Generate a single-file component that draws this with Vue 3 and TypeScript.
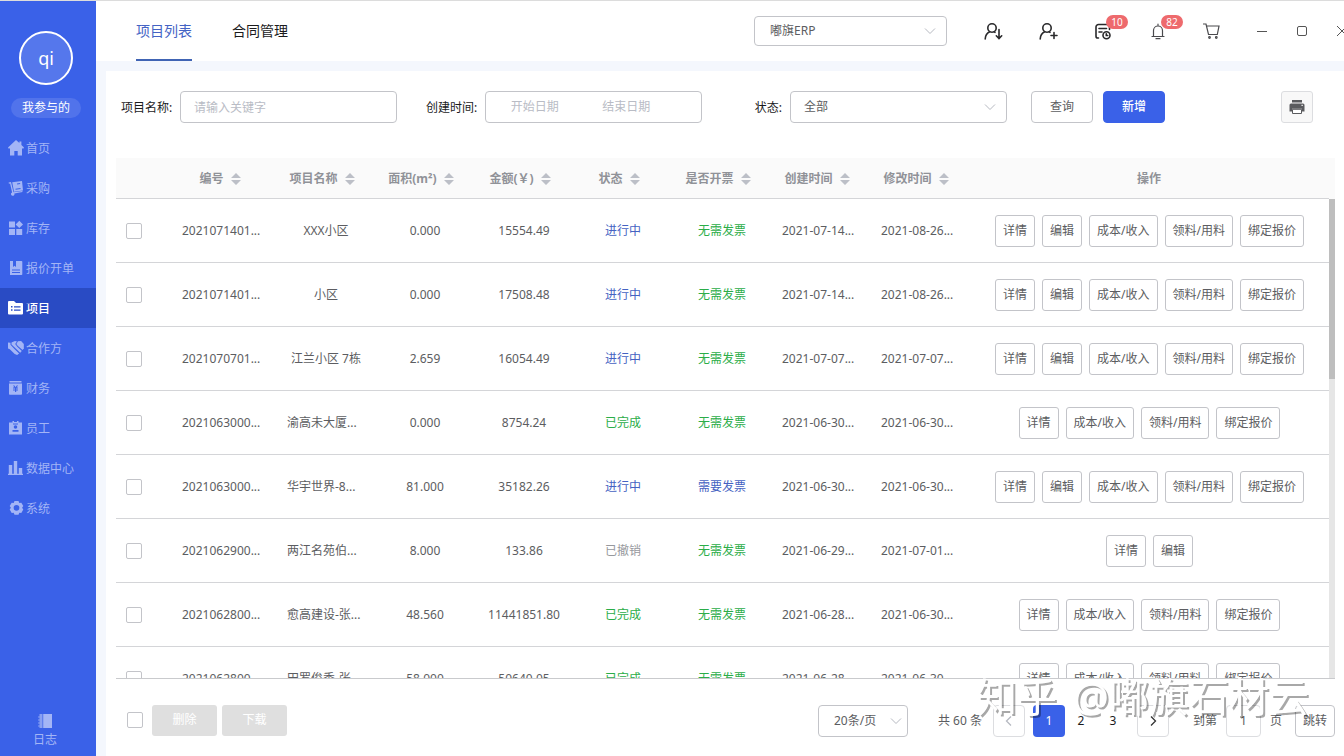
<script setup lang="ts">
import { computed, ref } from 'vue'

interface Project {
  code: string
  name: string
  area: string
  amount: string
  status: '进行中' | '已完成' | '已撤销'
  invoice: '无需发票' | '需要发票'
  created: string
  updated: string
  actions: string[]
}

const menu = [
  { label: '首页', icon: 'home' },
  { label: '采购', icon: 'purchase' },
  { label: '库存', icon: 'stock' },
  { label: '报价开单', icon: 'quote' },
  { label: '项目', icon: 'project' },
  { label: '合作方', icon: 'partner' },
  { label: '财务', icon: 'finance' },
  { label: '员工', icon: 'staff' },
  { label: '数据中心', icon: 'data' },
  { label: '系统', icon: 'system' },
]
const activeMenu = ref('项目')

const columns = ['编号', '项目名称', '面积(m²)', '金额(￥)', '状态', '是否开票', '创建时间', '修改时间']

const open = ['详情', '编辑', '成本/收入', '领料/用料', '绑定报价']
const done = ['详情', '成本/收入', '领料/用料', '绑定报价']

const projects: Project[] = [
  { code: '2021071401...', name: 'XXX小区', area: '0.000', amount: '15554.49', status: '进行中', invoice: '无需发票', created: '2021-07-14...', updated: '2021-08-26...', actions: open },
  { code: '2021071401...', name: '小区', area: '0.000', amount: '17508.48', status: '进行中', invoice: '无需发票', created: '2021-07-14...', updated: '2021-08-26...', actions: open },
  { code: '2021070701...', name: '江兰小区 7栋', area: '2.659', amount: '16054.49', status: '进行中', invoice: '无需发票', created: '2021-07-07...', updated: '2021-07-07...', actions: open },
  { code: '2021063000...', name: '渝高未大厦...', area: '0.000', amount: '8754.24', status: '已完成', invoice: '无需发票', created: '2021-06-30...', updated: '2021-06-30...', actions: done },
  { code: '2021063000...', name: '华宇世界-8...', area: '81.000', amount: '35182.26', status: '进行中', invoice: '需要发票', created: '2021-06-30...', updated: '2021-06-30...', actions: open },
  { code: '2021062900...', name: '两江名苑伯...', area: '8.000', amount: '133.86', status: '已撤销', invoice: '无需发票', created: '2021-06-29...', updated: '2021-07-01...', actions: ['详情', '编辑'] },
  { code: '2021062800...', name: '愈高建设-张...', area: '48.560', amount: '11441851.80', status: '已完成', invoice: '无需发票', created: '2021-06-28...', updated: '2021-06-30...', actions: done },
  { code: '2021062800...', name: '田罗俊秀-张...', area: '58.000', amount: '50640.05', status: '已完成', invoice: '无需发票', created: '2021-06-28...', updated: '2021-06-30...', actions: done },
]

const tone: Record<string, string> = {
  进行中: 'blue',
  需要发票: 'blue',
  已完成: 'green',
  无需发票: 'green',
  已撤销: 'gray',
}

const clipped = (text: string) => text.endsWith('...')

const selected = ref<number[]>([])
const allSelected = computed({
  get: () => selected.value.length === projects.length,
  set: (on: boolean) => {
    selected.value = on ? projects.map((_, i) => i) : []
  },
})

const page = ref(1)
const jump = ref('1')
</script>

<template>
  <div class="app">
    <aside class="sidebar">
      <div class="profile">
        <div class="avatar">qi</div>
        <button class="mine" type="button">我参与的</button>
      </div>
      <nav class="menu">
        <a
          v-for="item in menu"
          :key="item.label"
          href="#"
          :class="['menu-item', { active: item.label === activeMenu }]"
          @click.prevent="activeMenu = item.label"
        >
          <svg class="menu-icon" viewBox="0 0 16 16" aria-hidden="true">
            <path v-if="item.icon === 'home'" d="M8 0 0 7.400l.8 1.300L2 8.200V15.500h4.300v-4.500h3.400v4.500H14V8.200l1.200.5.8-1.300-2.600-2.500V1.600h-2v1.500z" />
            <template v-else-if="item.icon === 'purchase'">
              <path d="M.6 2.600 3 2l2.500 10.200 8.800-1.300.2 1.200-8.200 1.300a1.700 1.700 0 1 1-2.200-.9L2.100 3.500.9 3.800z" />
              <path fill-rule="evenodd" d="m4.200 2.300 9.800-1.300 1 9.500-9 1.300zM9 3.500l.2 1 3-.4-.1-1zm-1.600 5.300.2 1 5-.7-.1-1z" />
            </template>
            <path v-else-if="item.icon === 'stock'" d="M1 1.500h6v6H1zM1 9h6v6H1zM8.300 9h5.900v6H8.300zM11.300.8 15 4.500l-3.700 3.600-3.700-3.600z" />
            <path v-else-if="item.icon === 'quote'" fill-rule="evenodd" d="M2 1h3v6l1.500-1.300L8 7V1h5.500a.8.800 0 0 1 .8.800v12.400a.8.800 0 0 1-.8.800H2zm2 8.500v1h8v-1zM4 12v1h8v-1z" />
            <path v-else-if="item.icon === 'project'" fill-rule="evenodd" d="M0 2.200C0 1.500.5 1 1.200 1H6l2 2h6a1 1 0 0 1 1 1v9.500a1 1 0 0 1-1 1H1a1 1 0 0 1-1-1zM3 6v1.500h1.500V6zm3 .2v1.200h6.500V6.200zM3 9.300v1.500h1.500V9.300zm3 .2v1.200h6.500V9.500z" />
            <template v-else-if="item.icon === 'partner'">
              <path d="M0 2.500 2.500 2.800v2l4.200 4.400 4.400 4.200-2 1.500-2.400-.8L1.800 9.300 0 8.500z" />
              <path d="M3.500 2.600 7 1l2 .6L7.200 4l2.100 2.800L13.800 11l-1.600 1.800L3.500 4.500z" />
              <path d="m9.900 1.300 3.200-.2 2.700 3v4.300l-1.300 1.700-4.600-4.200L8.400 4z" />
            </template>
            <path v-else-if="item.icon === 'finance'" fill-rule="evenodd" d="M1.500 1h12v1.500h-12zM1 3.500h13V14a.8.800 0 0 1-.8.800H1.800A.8.800 0 0 1 1 14zM5 5.600l1.500 2H5v1h2v1H5v1h2V12h1.200v-1.400H10v-1H8.200v-1H10v-1H8.600l1.500-2H8.700L7.600 7.200 6.400 5.600z" />
            <path v-else-if="item.icon === 'staff'" fill-rule="evenodd" d="M1 2.500h3.500V1H6v1h3V1h1.500v1.500H14v12H1zm6.500 2.700a1.800 1.800 0 1 0 0 3.600 1.800 1.800 0 0 0 0-3.600zM4.500 10v1.800h6V10zM5 3.500v1h5v-1z" />
            <path v-else-if="item.icon === 'data'" d="M.8 5H4.200v9H.8zM5.800 1H9.200v13H5.800zM10.800 8H14.200v6h-3.400zM0 13.800h15V15H0z" />
            <path v-else fill-rule="evenodd" d="M6.500 1h4l.8 1.900 2-.2 2 3.400-1.200 1.700 1.200 1.700-2 3.500-2-.3-.8 2h-4l-.8-2-2 .3-2-3.500L2.900 7.800 1.700 6.100l2-3.400 2 .2zm2 4a2.800 2.800 0 1 0 0 5.700 2.800 2.800 0 0 0 0-5.700z" />
          </svg>
          <span>{{ item.label }}</span>
        </a>
      </nav>
      <a class="log" href="#" @click.prevent>
        <svg class="log-icon" viewBox="0 0 16 16" aria-hidden="true">
          <path d="M2.500 1h3v14h-3v-1.500H1v-1h1.500v-2H1v-1h1.500v-2H1v-1h1.500v-2H1v-1h1.500z" opacity=".75" />
          <path d="M6.200 1H15v14H6.200z" />
        </svg>
        <span>日志</span>
      </a>
    </aside>

    <div class="main">
      <header class="topbar">
        <nav class="tabs">
          <a class="tab current" href="#" @click.prevent>项目列表</a>
          <a class="tab" href="#" @click.prevent>合同管理</a>
        </nav>
        <div class="select company">
          <select aria-label="公司">
            <option>嘟旗ERP</option>
          </select>
          <svg class="chevron" viewBox="0 0 12 12" aria-hidden="true"><path d="m1 3.500 5 5 5-5" /></svg>
        </div>
        <div class="tools">
          <button type="button" aria-label="切换用户">
            <svg viewBox="0 0 20 20" aria-hidden="true">
              <circle cx="9" cy="7" r="4.200" /><path d="M2.200 18c.2-3.500 1.800-6 4.600-7.200M11 10.800l1 .6M16 8.500v8.800M13.300 14.800 16 17.600l2.700-2.800" />
            </svg>
          </button>
          <button type="button" aria-label="添加用户">
            <svg viewBox="0 0 20 20" aria-hidden="true">
              <circle cx="9" cy="7" r="4.200" /><path d="M2.200 18c.2-3.500 1.800-6 4.600-7.200M11 10.800l1 .6M16 11.500v6M13 14.500h6" />
            </svg>
          </button>
          <button type="button" aria-label="待办">
            <svg viewBox="0 0 20 20" aria-hidden="true">
              <path d="M5.500 17H4.800A1.800 1.800 0 0 1 3 15.200V6a2.500 2.500 0 0 1 2.500-2.500H14A2.500 2.500 0 0 1 16.500 6v2.500M6 7.500h7.500M6 11h3" /><circle cx="13.500" cy="14.300" r="3.500" /><path d="M13.300 12.800v1.700h1.400" />
            </svg>
            <span class="badge">10</span>
          </button>
          <button type="button" aria-label="通知">
            <svg class="thin" viewBox="0 0 20 20" aria-hidden="true">
              <path d="M4 15.500h12M5.500 15.300V9.500a4.500 4.500 0 0 1 9 0v5.800M10 4.800V3.200M8 17.700h4" />
            </svg>
            <span class="badge">82</span>
          </button>
          <button type="button" aria-label="购物车">
            <svg class="thin" viewBox="0 0 20 20" aria-hidden="true">
              <path d="M.5 3h2.500L5.500 13.500h8.800L16 5H3.600" /><circle cx="6.500" cy="16.500" r=".8" /><circle cx="13.300" cy="16.500" r=".8" />
            </svg>
          </button>
        </div>
        <div class="window">
          <button type="button" aria-label="最小化"><svg viewBox="0 0 12 12"><path d="M1 6.500h10" /></svg></button>
          <button type="button" aria-label="最大化"><svg viewBox="0 0 12 12"><rect x="1.500" y="1.500" width="9" height="9" rx="1.500" /></svg></button>
          <button type="button" aria-label="关闭"><svg viewBox="0 0 12 12"><path d="m1 1 10 10M11 1 1 11" /></svg></button>
        </div>
      </header>

      <main class="panel">
        <form class="filters" @submit.prevent>
          <div class="field">
            <label for="keyword">项目名称:</label>
            <input id="keyword" class="box" type="text" placeholder="请输入关键字" />
          </div>
          <div class="field">
            <label for="start">创建时间:</label>
            <div class="box range">
              <input id="start" type="text" placeholder="开始日期" />
              <input type="text" placeholder="结束日期" aria-label="结束日期" />
            </div>
          </div>
          <div class="field">
            <label for="status">状态:</label>
            <div class="select">
              <select id="status">
                <option>全部</option>
              </select>
              <svg class="chevron" viewBox="0 0 12 12" aria-hidden="true"><path d="m1 3.500 5 5 5-5" /></svg>
            </div>
          </div>
          <div class="submit">
            <button class="btn" type="submit">查询</button>
            <button class="btn primary" type="button">新增</button>
          </div>
          <button class="print" type="button" aria-label="打印">
            <svg viewBox="0 0 16 16" aria-hidden="true">
              <path fill-rule="evenodd" d="M3 1h10v2.500H3zM2 4.500h12a1.500 1.500 0 0 1 1.500 1.500v6.500H13V9.800H3v2.700H.5V6A1.500 1.500 0 0 1 2 4.500zm10.500 1.300v1.200h1.300V5.800z" />
              <path class="sheet" d="M3.500 10.300h9v4.200h-9z" />
            </svg>
          </button>
        </form>

        <section class="grid">
          <div class="scroller">
            <table>
              <colgroup>
                <col class="w-check" />
                <col class="w-code" />
                <col v-for="n in 7" :key="n" />
                <col class="w-actions" />
              </colgroup>
              <thead>
                <tr>
                  <th></th>
                  <th v-for="column in columns" :key="column">
                    <span class="sortable">
                      {{ column }}
                      <svg viewBox="0 0 12 14" aria-hidden="true"><path d="M1 6h10L6 1zM1 8h10l-5 5z" /></svg>
                    </span>
                  </th>
                  <th>操作</th>
                </tr>
              </thead>
              <tbody>
                <tr v-for="(row, i) in projects" :key="i">
                  <td class="check"><input v-model="selected" type="checkbox" :value="i" :aria-label="row.name" /></td>
                  <td :class="{ clipped: clipped(row.code) }">{{ row.code }}</td>
                  <td :class="{ clipped: clipped(row.name) }">{{ row.name }}</td>
                  <td>{{ row.area }}</td>
                  <td>{{ row.amount }}</td>
                  <td :class="tone[row.status]">{{ row.status }}</td>
                  <td :class="tone[row.invoice]">{{ row.invoice }}</td>
                  <td :class="{ clipped: clipped(row.created) }">{{ row.created }}</td>
                  <td :class="{ clipped: clipped(row.updated) }">{{ row.updated }}</td>
                  <td>
                    <div class="actions">
                      <button v-for="action in row.actions" :key="action" type="button">{{ action }}</button>
                    </div>
                  </td>
                </tr>
              </tbody>
            </table>
          </div>
          <div class="rail">
            <div class="rail-head"></div>
            <div class="track"><div class="thumb"></div></div>
          </div>
        </section>

        <footer class="footer">
          <div class="batch">
            <input v-model="allSelected" type="checkbox" aria-label="全选" />
            <button type="button" disabled>删除</button>
            <button type="button" disabled>下载</button>
          </div>
          <div class="pager">
            <div class="select size">
              <select aria-label="每页条数">
                <option>20条/页</option>
              </select>
              <svg class="chevron" viewBox="0 0 12 12" aria-hidden="true"><path d="m1 3.500 5 5 5-5" /></svg>
            </div>
            <span class="total">共 60 条</span>
            <button class="step prev" type="button" aria-label="上一页" @click="page = Math.max(1, page - 1)">
              <svg viewBox="0 0 12 12"><path d="M8 1.500 3.500 6 8 10.500" /></svg>
            </button>
            <div class="pages">
              <button v-for="n in 3" :key="n" type="button" :class="['page', { on: n === page }]" @click="page = n">{{ n }}</button>
            </div>
            <button class="step" type="button" aria-label="下一页" @click="page = Math.min(3, page + 1)">
              <svg viewBox="0 0 12 12"><path d="M4 1.500 8.500 6 4 10.500" /></svg>
            </button>
            <label class="jump">到第 <input v-model="jump" type="text" /> 页</label>
            <button class="go" type="button">跳转</button>
          </div>
          <div class="watermark"><span>知乎</span><span>@嘟旗石材云</span></div>
        </footer>
      </main>
    </div>
  </div>
</template>

<style>
body {
  overflow: hidden;
}
</style>

<style scoped>
.app {
  --line: #d4d5d8;
  --edge: #c3c4c9;
  display: flex;
  box-sizing: border-box;
  height: 100vh;
  border-top: 1px solid #dcdcdc;
  background: #f4f7fd;
  color: #5c5d61;
  font-family: "Noto Sans", "Noto Sans CJK SC", sans-serif;
  font-size: 12px;
  line-height: 16px;
  overflow: hidden;
}

.app *,
.app *::before {
  box-sizing: border-box;
}

button,
input,
select {
  margin: 0;
  padding: 0;
  color: inherit;
  font: inherit;
}

button {
  border: 0;
  background: none;
  white-space: nowrap;
  cursor: pointer;
}

a {
  color: inherit;
  text-decoration: none;
}

/* Sidebar */
.sidebar {
  display: flex;
  flex: none;
  flex-direction: column;
  width: 96px;
  padding: 30px 0 8px;
  background: #3a61e8;
  color: #fff;
}

.profile {
  display: flex;
  flex-direction: column;
  align-items: center;
  padding: 0 4px 10px 0;
}

.avatar {
  display: grid;
  place-items: center;
  width: 54px;
  height: 54px;
  border: 2px solid #fff;
  border-radius: 50%;
  background: #5577ec;
  font-size: 18px;
}

.mine {
  width: 70px;
  height: 20px;
  margin-top: 13px;
  border-radius: 10px;
  background: #5173eb;
}

.menu-item {
  display: flex;
  align-items: center;
  gap: 2px;
  height: 40px;
  padding-left: 8px;
  color: #a3b5f6;
}

.menu-item span {
  padding-top: 2px;
}

.menu-item.active {
  background: #294bc4;
  color: #fff;
  font-weight: 500;
}

.menu-icon,
.log-icon {
  width: 16px;
  height: 16px;
  fill: currentColor;
}

.log {
  display: flex;
  flex-direction: column;
  align-items: center;
  gap: 3px;
  margin-top: auto;
  padding-right: 6px;
  color: #a3b5f6;
}

/* Top bar */
.main {
  display: flex;
  flex: 1;
  flex-direction: column;
  min-width: 0;
}

.topbar {
  display: flex;
  flex: none;
  align-items: center;
  height: 60px;
  padding-left: 40px;
  background: #fff;
  overflow: hidden;
}

.tabs {
  display: flex;
  gap: 40px;
  margin-right: auto;
  color: #1b1b1d;
  font-size: 14px;
  line-height: 60px;
}

.tab {
  height: 60px;
}

.tab.current {
  border-bottom: 2px solid #4064b4;
  color: #4463c4;
}

.select {
  position: relative;
  width: 217px;
}

.select select {
  display: block;
  width: 100%;
  height: 32px;
  padding: 0 28px 0 13px;
  border: 1px solid var(--edge);
  border-radius: 4px;
  background: #fff;
  appearance: none;
}

.chevron {
  position: absolute;
  top: 50%;
  right: 11px;
  width: 12px;
  height: 12px;
  margin-top: -6px;
  fill: none;
  stroke: #b6b9c1;
  pointer-events: none;
}

.company {
  width: 193px;
}

.company select {
  height: 30px;
  padding-left: 15px;
}

.tools {
  display: flex;
  margin: 0 2px 0 18px;
  color: #29292b;
}

.tools button {
  position: relative;
  display: grid;
  place-items: center;
  width: 55px;
  height: 40px;
}

.tools svg {
  width: 20px;
  height: 20px;
  fill: none;
  stroke: currentColor;
  stroke-width: 1.6;
  stroke-linecap: round;
}

.tools svg.thin {
  stroke: #4a4a4d;
  stroke-width: 1.2;
}

.badge {
  position: absolute;
  top: 4px;
  left: 31px;
  width: 22px;
  height: 14px;
  border-radius: 7px;
  background: #ee6a6d;
  color: #fff;
  font-size: 10px;
  line-height: 14px;
}

.window {
  display: flex;
  margin-right: -18px;
}

.window button {
  display: grid;
  place-items: center;
  width: 40px;
  height: 40px;
}

.window svg {
  width: 12px;
  height: 12px;
  fill: none;
  stroke: #555;
}

/* Filters */
.panel {
  display: flex;
  flex: 1;
  flex-direction: column;
  min-height: 0;
  margin: 10px 0 0 10px;
  padding: 20px 9px 0 10px;
  background: #fff;
}

.filters {
  display: flex;
  align-items: center;
  margin-bottom: 35px;
  padding: 0 22px 0 5px;
}

.field {
  display: flex;
  align-items: center;
  gap: 8px;
  margin-right: 29px;
}

.field label {
  width: 51px;
  padding-top: 2px;
  color: #1b1b1d;
  text-align: right;
  white-space: nowrap;
}

.box {
  width: 217px;
  height: 32px;
  padding: 0 13px;
  border: 1px solid var(--edge);
  border-radius: 4px;
  background: #fff;
}

.range {
  display: flex;
  padding: 0 29px 0 3px;
}

.range input {
  flex: 1;
  min-width: 0;
  border: 0;
  background: none;
  text-align: center;
}

input::placeholder {
  color: #b9bcc5;
}

.submit {
  display: flex;
  gap: 10px;
  margin-left: -5px;
}

.btn {
  width: 62px;
  height: 32px;
  border: 1px solid var(--edge);
  border-radius: 4px;
  background: #fff;
}

.btn.primary {
  border-color: #3a61e8;
  background: #3a61e8;
  color: #fff;
  font-weight: 500;
}

.print {
  display: grid;
  place-items: center;
  width: 32px;
  height: 32px;
  margin-left: auto;
  border: 1px solid #dcdde0;
  border-radius: 3px;
  background: #f8f8f8;
}

.print svg {
  width: 16px;
  height: 16px;
  fill: #5a5b5e;
}

.print .sheet {
  fill: #fff;
  stroke: #5a5b5e;
}

/* Table */
.grid {
  display: flex;
  flex: 1;
  min-height: 0;
  border-bottom: 1px solid #c9cacd;
}

.scroller {
  flex: 1;
  min-width: 0;
  overflow-y: auto;
  scrollbar-width: none;
}

table {
  width: 100%;
  border-spacing: 0;
  table-layout: fixed;
}

.w-check {
  width: 55px;
}

.w-code {
  width: 105px;
}

.w-actions {
  width: 360px;
}

th,
td {
  padding: 0;
  border-bottom: 1px solid var(--line);
  text-align: center;
  white-space: nowrap;
}

th {
  position: sticky;
  top: 0;
  height: 41px;
  padding-top: 2px;
  background: #fafafa;
  color: #909298;
  font-weight: 700;
}

td {
  height: 64px;
  padding-left: 1px;
}

td.clipped {
  padding-left: 11px;
  text-align: left;
}

td.check {
  padding-left: 10px;
  text-align: left;
}

.sortable {
  display: inline-flex;
  align-items: center;
  gap: 6px;
  padding-right: 6px;
}

.sortable svg {
  width: 12px;
  height: 14px;
  fill: #bcbfc7;
}

.blue {
  color: #4562c2;
}

.green {
  color: #2bad48;
}

.gray {
  color: #96989d;
}

input[type="checkbox"] {
  display: block;
  flex: none;
  width: 16px;
  height: 16px;
  border: 1px solid var(--edge);
  border-radius: 2px;
  background: #fff;
  appearance: none;
}

input[type="checkbox"]:checked {
  border-color: #3a61e8;
  background: #3a61e8;
}

.actions {
  display: flex;
  justify-content: center;
  gap: 7px;
}

.actions button {
  height: 32px;
  padding: 0 7px;
  border: 1px solid var(--edge);
  border-radius: 3px;
  background: #fff;
}

.rail {
  display: flex;
  flex: none;
  flex-direction: column;
  width: 6px;
}

.rail-head {
  height: 41px;
  background: #fafafa;
}

.track {
  flex: 1;
  background: #e6e6e6;
}

.thumb {
  height: 37.5%;
  background: #bebebe;
}

/* Footer */
.footer {
  position: relative;
  display: flex;
  flex: none;
  align-items: center;
  justify-content: space-between;
  height: 77px;
  padding: 6px 0 0 11px;
}

.batch {
  display: flex;
  align-items: center;
  gap: 5px;
  padding-bottom: 1px;
}

.batch input {
  margin-right: 4px;
}

.batch button {
  width: 65px;
  height: 31px;
  border-radius: 3px;
  background: #dfdfdf;
  color: #fff;
}

.pager {
  display: flex;
  align-items: center;
}

.size {
  width: 90px;
}

.size select {
  padding-left: 15px;
}

.size .chevron {
  right: 6px;
}

.total {
  margin: 0 11px 0 30px;
  white-space: nowrap;
}

.step {
  display: grid;
  place-items: center;
  width: 32px;
  height: 32px;
  border: 1px solid #dcdde0;
  border-radius: 4px;
}

.step svg {
  width: 12px;
  height: 12px;
  fill: none;
  stroke: #333;
  stroke-width: 1.3;
}

.step.prev svg {
  stroke: #b6b9c1;
}

.pages {
  display: flex;
  margin: 0 8px;
  color: #1b1b1d;
}

.page {
  width: 32px;
  height: 32px;
  border-radius: 4px;
}

.page.on {
  background: #3a61e8;
  color: #fff;
}

.jump {
  display: flex;
  align-items: center;
  gap: 9px;
  margin: 0 13px 0 24px;
  white-space: nowrap;
}

.jump input {
  width: 35px;
  height: 32px;
  border: 1px solid #dcdde0;
  border-radius: 4px;
  background: #fff;
  text-align: center;
}

.go {
  width: 40px;
  height: 32px;
  border: 1px solid var(--edge);
  border-radius: 4px;
  background: #fff;
}

.watermark {
  position: absolute;
  top: -6px;
  right: 26px;
  display: flex;
  gap: 16px;
  color: #fff;
  font-size: 40px;
  line-height: 48px;
  text-shadow: 2px 2px 0 rgba(0, 0, 0, 0.34);
  white-space: nowrap;
  pointer-events: none;
}
</style>
